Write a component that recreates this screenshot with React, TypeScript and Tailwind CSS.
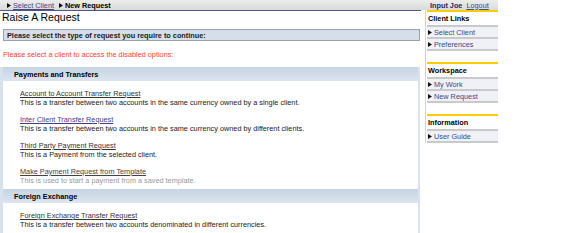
import React from "react";

const font = { fontFamily: '"Liberation Sans", Arial, sans-serif' };

function Arrow({ className = "" }: { className?: string }) {
  return (
    <svg width="4" height="5" viewBox="0 0 4 5" className={`inline-block shrink-0 ${className}`}>
      <path d="M0 0 L4 2.5 L0 5 Z" fill="#111" />
    </svg>
  );
}

type Request = {
  title: string;
  desc: string;
  linkClass: string;
  descClass?: string;
};

const sections: { name: string; items: Request[] }[] = [
  {
    name: "Payments and Transfers",
    items: [
      {
        title: "Account to Account Transfer Request",
        desc: "This is a transfer between two accounts in the same currency owned by a single client.",
        linkClass: "text-[#333]",
      },
      {
        title: "Inter Client Transfer Request",
        desc: "This is a transfer between two accounts in the same currency owned by different clients.",
        linkClass: "text-[#3a3f8c]",
      },
      {
        title: "Third Party Payment Request",
        desc: "This is a Payment from the selected client.",
        linkClass: "text-[#333]",
      },
      {
        title: "Make Payment Request from Template",
        desc: "This is used to start a payment from a saved template.",
        linkClass: "text-[#444]",
        descClass: "text-[#999]",
      },
    ],
  },
  {
    name: "Foreign Exchange",
    items: [
      {
        title: "Foreign Exchange Transfer Request",
        desc: "This is a transfer between two accounts denominated in different currencies.",
        linkClass: "text-[#333]",
      },
    ],
  },
];

const sideLinks = [
  { name: "Client Links", links: ["Select Client", "Preferences"] },
  { name: "Workspace", links: ["My Work", "New Request"] },
  { name: "Information", links: ["User Guide"] },
];

function SideBox({ name, links }: { name: string; links: string[] }) {
  return (
    <div className="mb-[11px]">
      <div className="h-[2px] bg-[#ffcc00]" />
      <div className="h-[13px] flex items-center pl-[1px] font-bold text-black">{name}</div>
      <div className="h-[2px] bg-[#c9c9cc]" />
      {links.map((l) => (
        <div key={l}>
          <div className="h-[10px] flex items-center gap-[2px] pl-[1px] bg-[#f0f0f7]">
            <Arrow />
            <span className="text-[#3b4a85]">{l}</span>
          </div>
          <div className="h-[2px] bg-[#c9c9cc]" />
        </div>
      ))}
    </div>
  );
}

export default function App() {
  return (
    <div className="w-[562px] h-[233px] overflow-hidden bg-white text-[7.3px] leading-[9px] text-[#111]" style={font}>
      <div className="w-[498px]">
        {/* top bar */}
        <div className="h-[10px] flex items-center bg-gradient-to-b from-[#ededed] to-[#dadada]">
          <div className="w-[421px] flex items-center pl-[7px] gap-[2px]">
            <Arrow />
            <span className="underline text-[#3b4a85]">Select Client</span>
            <Arrow className="ml-[3px]" />
            <span className="font-bold text-black">New Request</span>
          </div>
          <div className="flex items-center pl-[9px] gap-[4px]">
            <span className="font-bold text-[#1f2a5e]">Input Joe</span>
            <span className="underline text-[#3b4a85]">Logout</span>
          </div>
        </div>

        <div className="flex">
          {/* main */}
          <div className="w-[421px] border-t border-[#50568a]">
            <div className="pl-[2px] text-[10.5px] leading-[12px] text-black">Raise A Request</div>
            <div className="mt-[6px] ml-[3px] mr-[1px] h-[12px] flex items-center pl-[3px] bg-[#d5dee9] border border-[#9aa3ad] font-bold text-[#1a1a1a]">
              Please select the type of request you require to continue:
            </div>
            <div className="mt-[9px] pl-[3px] text-[#ff3b3b]">
              Please select a client to access the disabled options:
            </div>
            <div className="mt-[8px] w-[420px] border-l-[3px] border-r-[2px] border-[#d8e1ec]">
              {sections.map((s) => (
                <div key={s.name}>
                  <div className="h-[14px] flex items-center pl-[11px] font-bold text-black bg-gradient-to-b from-[#c6d4e3] to-[#dce5ef]">
                    {s.name}
                  </div>
                  <div className="bg-white pt-[8px] pb-[4px] pl-[17px] flex flex-col gap-[8px]">
                    {s.items.map((it) => (
                      <div key={it.title}>
                        <div className={`underline ${it.linkClass}`}>{it.title}</div>
                        <div className={it.descClass ?? "text-[#1a1a1a]"}>{it.desc}</div>
                      </div>
                    ))}
                  </div>
                </div>
              ))}
            </div>
          </div>

          {/* sidebar */}
          <div className="pl-[4px]">
            <div className="border-l border-[#d4d4d4] pl-[1px] w-[73px]">
              {sideLinks.map((b) => (
                <SideBox key={b.name} name={b.name} links={b.links} />
              ))}
            </div>
          </div>
        </div>
      </div>
    </div>
  );
}
